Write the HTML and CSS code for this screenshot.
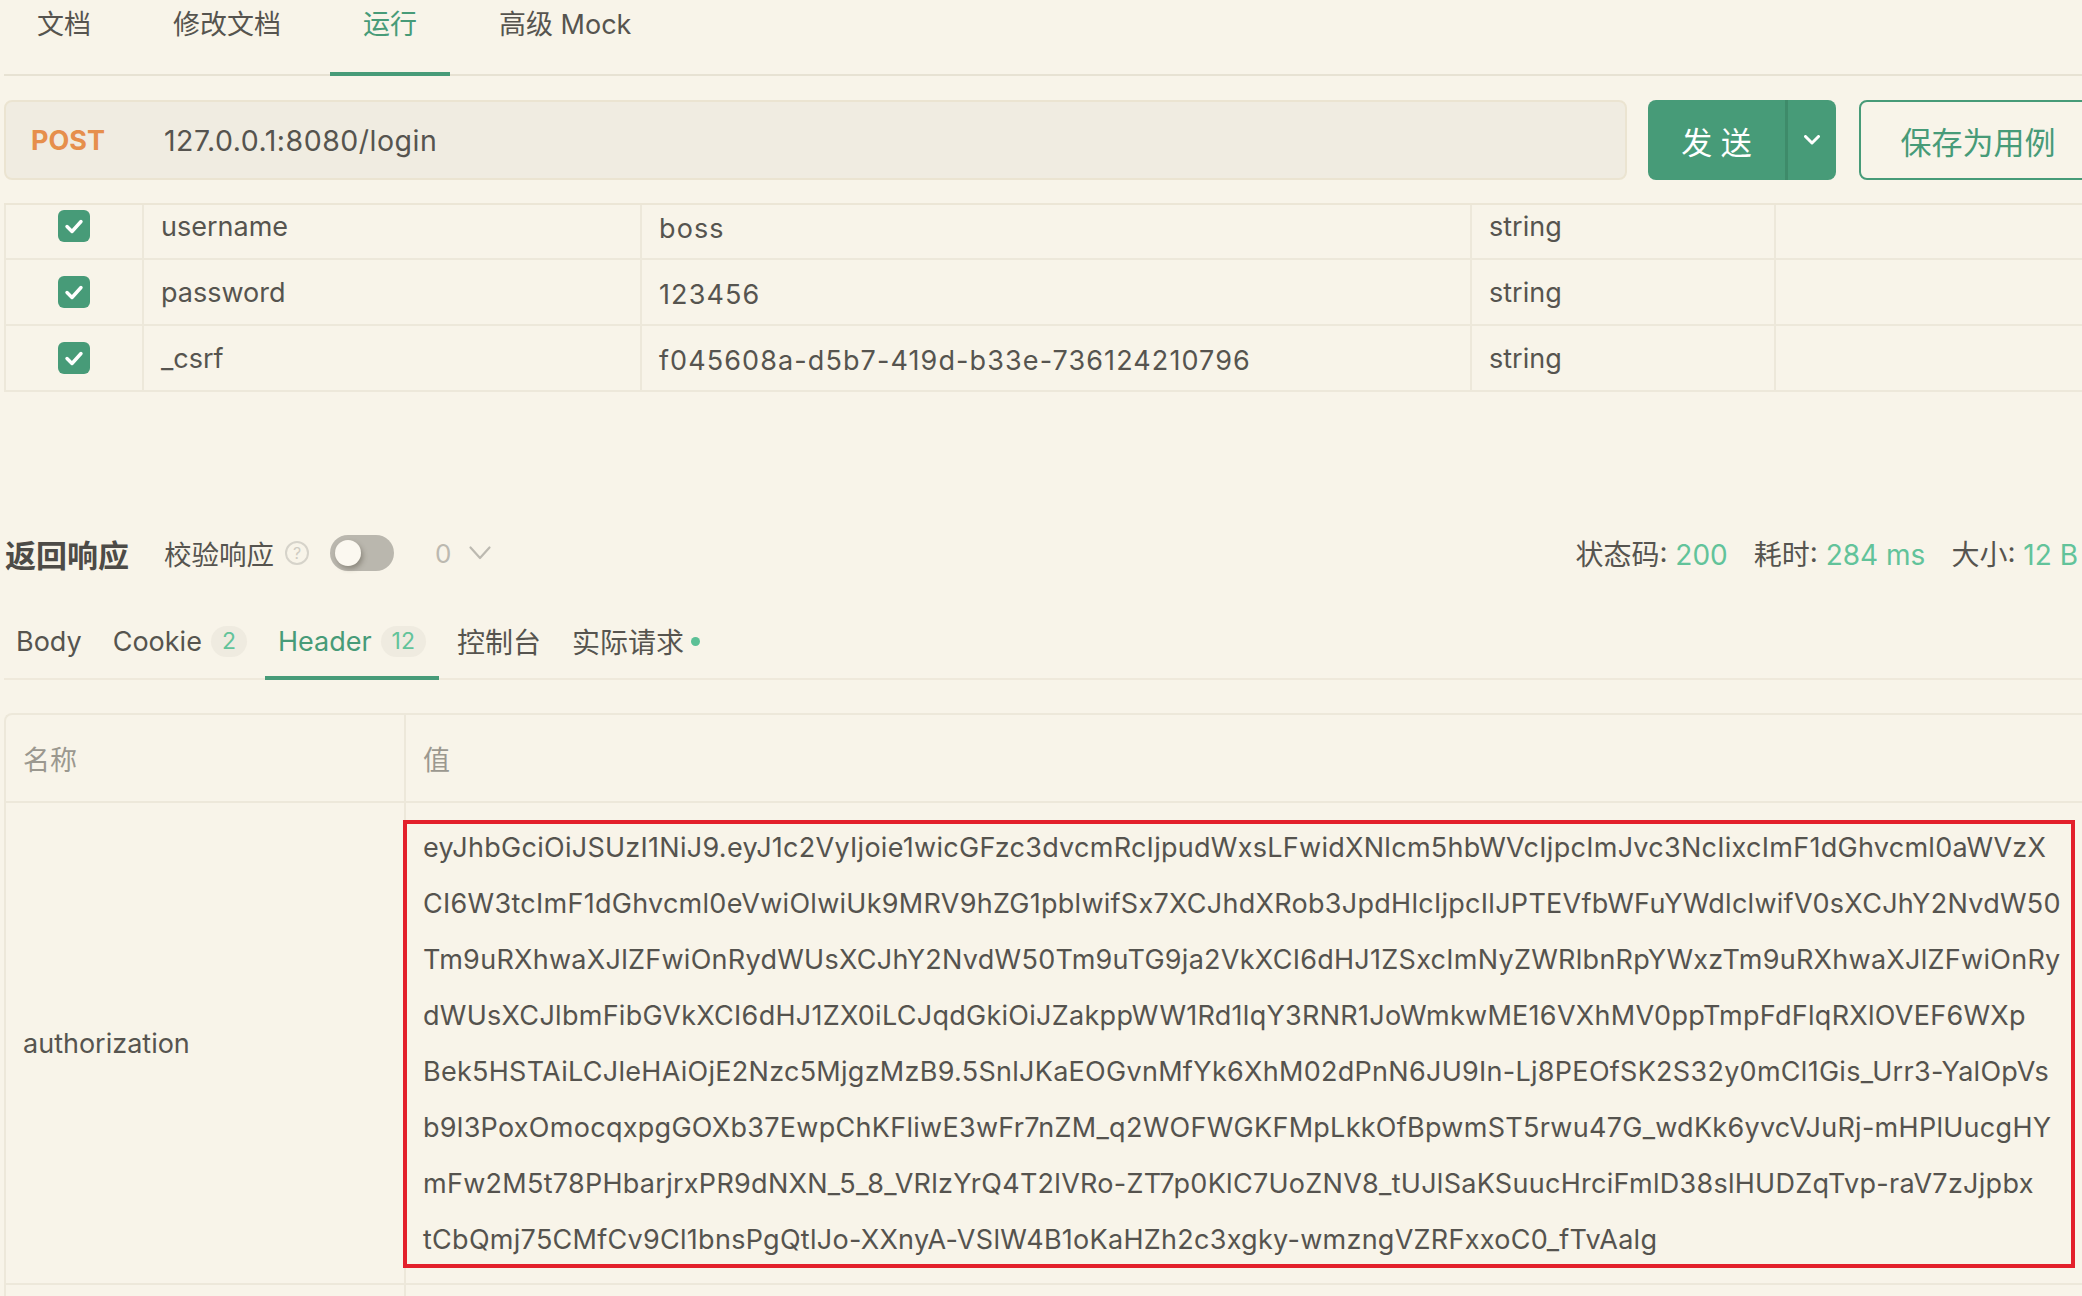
FILE: index.html
```html
<!DOCTYPE html>
<html lang="zh-CN">
<head>
<meta charset="utf-8">
<title>运行</title>
<link rel="stylesheet" href="styles.css">
</head>
<body>
<div class="page">
  <nav class="tabs">
    <div class="tab">文档</div>
    <div class="tab">修改文档</div>
    <div class="tab active">运行</div>
    <div class="tab">高级 Mock</div>
  </nav>

  <div class="request-row">
    <div class="url-box">
      <span class="method">POST</span>
      <span class="url">127.0.0.1:8080/login</span>
    </div>
    <div class="send-group">
      <div class="send">发 送</div>
      <div class="send-sep"></div>
      <div class="send-more">
        <svg width="16" height="10" viewBox="0 0 16 10"><polyline points="1.5,1.5 8,8 14.5,1.5" fill="none" stroke="#fff" stroke-width="3" stroke-linecap="round" stroke-linejoin="round"/></svg>
      </div>
    </div>
    <div class="save">保存为用例</div>
  </div>

  <div class="params">
    <div class="params-inner">
      <div class="prow">
        <div class="pcell ccheck"><span class="checkbox"><svg width="32" height="32" viewBox="0 0 32 32"><polyline points="9,16.5 14,21.5 23,11.5" fill="none" stroke="#fff" stroke-width="3.4" stroke-linecap="round" stroke-linejoin="round"/></svg></span></div>
        <div class="pcell">username</div>
        <div class="pcell val">boss</div>
        <div class="pcell">string</div>
        <div class="pcell"></div>
      </div>
      <div class="prow">
        <div class="pcell ccheck"><span class="checkbox"><svg width="32" height="32" viewBox="0 0 32 32"><polyline points="9,16.5 14,21.5 23,11.5" fill="none" stroke="#fff" stroke-width="3.4" stroke-linecap="round" stroke-linejoin="round"/></svg></span></div>
        <div class="pcell">password</div>
        <div class="pcell val">123456</div>
        <div class="pcell">string</div>
        <div class="pcell"></div>
      </div>
      <div class="prow">
        <div class="pcell ccheck"><span class="checkbox"><svg width="32" height="32" viewBox="0 0 32 32"><polyline points="9,16.5 14,21.5 23,11.5" fill="none" stroke="#fff" stroke-width="3.4" stroke-linecap="round" stroke-linejoin="round"/></svg></span></div>
        <div class="pcell">_csrf</div>
        <div class="pcell val">f045608a-d5b7-419d-b33e-736124210796</div>
        <div class="pcell">string</div>
        <div class="pcell"></div>
      </div>
    </div>
  </div>

  <div class="resp-head">
    <div class="resp-left">
      <span class="resp-title">返回响应</span>
      <span class="verify">校验响应</span>
      <span class="help">?</span>
      <span class="toggle"><span class="knob"></span></span>
      <span class="count">0</span>
      <svg class="count-chev" width="22" height="14" viewBox="0 0 22 14"><polyline points="1.5,1.5 11,12 20.5,1.5" fill="none" stroke="#bcb9b0" stroke-width="2.2" stroke-linecap="round" stroke-linejoin="round"/></svg>
    </div>
    <div class="stats">
      <span class="stat">状态码: <b>200</b></span>
      <span class="stat">耗时: <b>284 ms</b></span>
      <span class="stat">大小: <b>12 B</b></span>
    </div>
  </div>

  <nav class="rtabs">
    <div class="rtab">Body</div>
    <div class="rtab">Cookie<span class="badge">2</span></div>
    <div class="rtab active">Header<span class="badge">12</span></div>
    <div class="rtab cjk">控制台</div>
    <div class="rtab cjk">实际请求<span class="dot"></span></div>
  </nav>

  <div class="htable">
    <div class="hrow head">
      <div class="hcell">名称</div>
      <div class="hcell">值</div>
    </div>
    <div class="hrow">
      <div class="hcell name">authorization</div>
      <div class="hcell value">
        <div class="redbox">
          <div class="token">
            <div class="tline">eyJhbGciOiJSUzI1NiJ9.eyJ1c2VyIjoie1wicGFzc3dvcmRcIjpudWxsLFwidXNlcm5hbWVcIjpcImJvc3NcIixcImF1dGhvcml0aWVzX</div>
            <div class="tline">CI6W3tcImF1dGhvcml0eVwiOlwiUk9MRV9hZG1pblwifSx7XCJhdXRob3JpdHlcIjpcIlJPTEVfbWFuYWdlclwifV0sXCJhY2NvdW50</div>
            <div class="tline">Tm9uRXhwaXJlZFwiOnRydWUsXCJhY2NvdW50Tm9uTG9ja2VkXCI6dHJ1ZSxcImNyZWRlbnRpYWxzTm9uRXhwaXJlZFwiOnRy</div>
            <div class="tline">dWUsXCJlbmFibGVkXCI6dHJ1ZX0iLCJqdGkiOiJZakppWW1Rd1lqY3RNR1JoWmkwME16VXhMV0ppTmpFdFlqRXlOVEF6WXp</div>
            <div class="tline">Bek5HSTAiLCJleHAiOjE2Nzc5MjgzMzB9.5SnlJKaEOGvnMfYk6XhM02dPnN6JU9In-Lj8PEOfSK2S32y0mCl1Gis_Urr3-YalOpVs</div>
            <div class="tline">b9l3PoxOmocqxpgGOXb37EwpChKFliwE3wFr7nZM_q2WOFWGKFMpLkkOfBpwmST5rwu47G_wdKk6yvcVJuRj-mHPlUucgHY</div>
            <div class="tline">mFw2M5t78PHbarjrxPR9dNXN_5_8_VRlzYrQ4T2lVRo-ZT7p0KlC7UoZNV8_tUJlSaKSuucHrciFmlD38slHUDZqTvp-raV7zJjpbx</div>
            <div class="tline">tCbQmj75CMfCv9Cl1bnsPgQtlJo-XXnyA-VSlW4B1oKaHZh2c3xgky-wmzngVZRFxxoC0_fTvAalg</div>
          </div>
        </div>
      </div>
    </div>
    <div class="hrow">
      <div class="hcell name"></div>
      <div class="hcell"></div>
    </div>
  </div>
</div>
</body>
</html>
```
FILE: styles.css
```css
* { box-sizing: border-box; margin: 0; padding: 0; }
html, body { background: #f8f4e9; }
body {
  width: 2082px;
  height: 1296px;
  overflow: hidden;
  font-family: Inter, "Noto Sans CJK SC", sans-serif;
  color: #56544f;
  font-size: 27px;
}
.page { width: 2093px; margin-left: 4px; }

/* top tabs */
.tabs {
  display: flex;
  align-items: flex-start;
  gap: 16px;
  height: 76px;
  border-bottom: 2px solid #e7e2d3;
}
.tab {
  height: 76px;
  padding: 0 33px;
  line-height: 50px;
  font-size: 27px;
  border-bottom: 4px solid transparent;
  margin-bottom: -2px;
  white-space: nowrap;
}
.tab.active { color: #479b78; border-bottom-color: #479b78; }

/* request row */
.request-row { display: flex; margin-top: 24px; height: 80px; }
.url-box {
  flex: 1;
  display: flex;
  align-items: center;
  background: #f0ece1;
  border: 2px solid #ebe4d1;
  border-radius: 8px;
  padding-left: 25px;
}
.method { width: 133px; font-weight: bold; color: #e68f4c; font-size: 27px; }
.url { font-size: 28.5px; letter-spacing: 0.5px; color: #56544f; }
.send-group {
  margin-left: 21px;
  width: 188px;
  display: flex;
  background: #479b78;
  border-radius: 8px;
  overflow: hidden;
}
.send {
  width: 137px;
  display: flex;
  align-items: center;
  justify-content: center;
  color: #fff;
  font-size: 31px;
  white-space: pre;
}
.send-sep { width: 3px; background: #3e8b6a; }
.send-more { flex: 1; display: flex; align-items: center; justify-content: center; }
.save {
  margin-left: 23px;
  width: 238px;
  border: 2px solid #479b78;
  border-radius: 8px;
  color: #479b78;
  font-size: 31px;
  display: flex;
  align-items: center;
  justify-content: center;
  white-space: nowrap;
}

/* params table */
.params {
  margin-top: 23px;
  height: 190px;
  overflow: hidden;
  border-top: 2px solid #ece6d6;
}
.params-inner { margin-top: -11px; }
.prow {
  display: grid;
  grid-template-columns: 138px 498px 830px 304px 1fr;
  height: 66px;
  border-left: 2px solid #ede8da;
  border-bottom: 2px solid #ede8da;
}
.pcell {
  border-right: 2px solid #ede8da;
  display: flex;
  align-items: center;
  padding-left: 17px;
  font-size: 27px;
  white-space: nowrap;
}
.pcell.val { padding-top: 4px; letter-spacing: 1.1px; }
.pcell.ccheck { justify-content: center; padding-left: 0; }
.checkbox {
  width: 32px;
  height: 32px;
  border-radius: 6px;
  background: #479b78;
  display: block;
}
.checkbox svg { display: block; }

/* response header */
.resp-head {
  margin-top: 137px;
  height: 46px;
  display: flex;
  align-items: center;
  justify-content: space-between;
}
.resp-left { display: flex; align-items: center; }
.resp-title { font-size: 31px; font-weight: bold; color: #4d4b47; margin-left: 1px; }
.verify { margin-left: 35px; font-size: 27.5px; }
.help {
  margin-left: 11px;
  width: 24px;
  height: 24px;
  border: 2px solid #d6d3ca;
  border-radius: 50%;
  color: #cfccc3;
  font-size: 16px;
  line-height: 20px;
  text-align: center;
}
.toggle {
  margin-left: 21px;
  width: 64px;
  height: 36px;
  border-radius: 18px;
  background: #bab7ae;
  display: flex;
  align-items: center;
  padding-left: 5px;
}
.knob {
  width: 26px;
  height: 26px;
  border-radius: 50%;
  background: #fbf8f0;
  box-shadow: 2px 3px 5px rgba(60, 55, 40, 0.35);
}
.count { margin-left: 41px; font-size: 26px; color: #bcb9b0; }
.count-chev { margin-left: 18px; }
.stats { display: flex; gap: 26px; padding-right: 19px; }
.stat { font-size: 28px; white-space: pre; }
.stat b { font-weight: normal; color: #62c39a; }

/* response tabs */
.rtabs {
  margin-top: 30px;
  display: flex;
  align-items: flex-start;
  gap: 5px;
  height: 74px;
  border-bottom: 2px solid #efe9db;
}
.rtab {
  height: 74px;
  margin-bottom: -2px;
  padding: 0 13px;
  border-bottom: 4px solid transparent;
  display: flex;
  align-items: center;
  font-size: 27px;
  white-space: nowrap;
}
.rtab.cjk { font-size: 28px; }
.rtab:first-child { padding-left: 12px; }
.rtab.active { color: #479b78; border-bottom-color: #479b78; }
.badge {
  margin-left: 9px;
  height: 31px;
  min-width: 32px;
  padding: 0 11px;
  border-radius: 16px;
  background: #efebe0;
  color: #62c39a;
  font-size: 23px;
  display: flex;
  align-items: center;
  justify-content: center;
}
.dot {
  margin-left: 7px;
  width: 9px;
  height: 9px;
  border-radius: 50%;
  background: #5cc096;
}

/* header table */
.htable {
  margin-top: 33px;
  border: 2px solid #ede8da;
  border-right: none;
  border-radius: 8px 0 0 0;
}
.hrow {
  display: grid;
  grid-template-columns: 400px 1fr;
  border-bottom: 2px solid #ede8da;
}
.hrow.head { height: 88px; }
.hcell {
  border-right: 2px solid #ede8da;
  display: flex;
  align-items: center;
  padding-left: 17px;
  font-size: 27px;
  white-space: nowrap;
}
.head .hcell { color: #9b988f; }
.hcell.value { display: block; padding: 17px 20px 15px 0; }
.redbox {
  margin-left: -3px;
  height: 448px;
  border: 4px solid #e3202b;
  padding-left: 16px;
}
.token { margin: -4px 0; }
.tline { height: 56px; line-height: 56px; font-size: 27px; letter-spacing: 0.28px; white-space: nowrap; color: #55534e; }
.hrow:last-child { height: 70px; }
```
